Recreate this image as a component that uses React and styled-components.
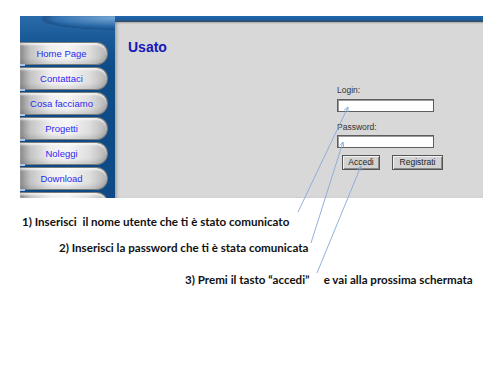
import React from "react"
import styled, { createGlobalStyle } from "styled-components"

const GlobalStyle = createGlobalStyle`
  html, body {
    margin: 0;
    padding: 0;
    background: #fff;
  }
`

const menu = ["Home Page", "Contattaci", "Cosa facciamo", "Progetti", "Noleggi", "Download", ""]

const notes = [
  { indent: 2, gap: 16, text: "1) Inserisci\u00a0 il nome utente che ti è stato comunicato" },
  { indent: 39, gap: 11, text: "2) Inserisci la password che ti è stata comunicata" },
  { indent: 165, gap: 17, text: "3) Premi il tasto \u201caccedi\u201d\u00a0\u00a0\u00a0\u00a0 e vai alla prossima schermata" },
]

// from (bottom end) -> to (arrow tip)
const arrows = [
  { x1: 298, y1: 212, x2: 348, y2: 107 },
  { x1: 311, y1: 243, x2: 343, y2: 142 },
  { x1: 317, y1: 273, x2: 361, y2: 166 },
]

function head({ x1, y1, x2, y2 }) {
  const a = Math.atan2(y1 - y2, x1 - x2)
  const len = 5
  const p = (d) => `${x2 + len * Math.cos(a + d)},${y2 + len * Math.sin(a + d)}`
  return `${p(0.45)} ${x2},${y2} ${p(-0.45)}`
}

function App() {
  return (
    <Page>
      <GlobalStyle />
      <Frame>
        <Sidebar>
          {menu.map((m, i) => (
            <MenuButton key={i} $last={i === menu.length - 1}>{m}</MenuButton>
          ))}
        </Sidebar>
        <Content>
          <Title>Usato</Title>
          <LoginForm onSubmit={(e) => e.preventDefault()}>
            <Label>Login:</Label>
            <Field type="text" />
            <Label $spaced>Password:</Label>
            <Field type="password" />
            <Actions>
              <FormButton type="submit" $w={38}>Accedi</FormButton>
              <FormButton type="button" $w={51}>Registrati</FormButton>
            </Actions>
          </LoginForm>
        </Content>
      </Frame>

      <Notes>
        {notes.map((n, i) => (
          <Note key={i} $indent={n.indent} $gap={n.gap}>{n.text}</Note>
        ))}
      </Notes>

      <Overlay width="500" height="375" viewBox="0 0 500 375">
        {arrows.map((a, i) => (
          <g key={i} stroke="#86a8d8" strokeWidth="0.9" fill="none">
            <line x1={a.x1} y1={a.y1} x2={a.x2} y2={a.y2} />
            <polyline points={head(a)} />
          </g>
        ))}
      </Overlay>
    </Page>
  )
}

//styled components

const Page = styled.div`
  position: relative;
  width: 500px;
  height: 375px;
  padding: 16px 0 0 20px;
  box-sizing: border-box;
  overflow: hidden;
`
const Frame = styled.div`
  display: flex;
  width: 463px;
  height: 182px;
  background: linear-gradient(180deg, #2067aa 0px, #1a5c9e 4px, #2e4f6e 5px, #3b4c5c 6px, #0e4c88 6px);
`
const Sidebar = styled.div`
  width: 95px;
  display: flex;
  flex-direction: column;
  gap: 2px;
  padding-top: 26px;
  overflow: hidden;
  background:
    radial-gradient(ellipse 70px 9px at 95px 2px, rgba(150,190,230,0.7), rgba(150,190,230,0) 100%),
    radial-gradient(ellipse 75px 11px at 95px 3px, rgba(20,50,90,0.0) 80%, rgba(20,50,90,0.35) 95%, rgba(20,50,90,0) 100%),
    linear-gradient(180deg, #2a6bab 0%, #1a5a98 12%, #0e4c88 28%, #0d4a86 100%);
`
const MenuButton = styled.div`
  position: relative;
  flex: 0 0 23px;
  width: 88px;
  box-sizing: border-box;
  display: flex;
  align-items: center;
  justify-content: center;
  padding-right: 4px;
  border-radius: 0 12px 12px 0;
  border: 1px solid #7b7b7b;
  border-left: none;
  background: linear-gradient(90deg, #8a8a8a 0%, #c4c4c4 12%, #efefef 35%, #f6f6f6 55%, #dedede 80%, #b5b5b5 100%);
  box-shadow: inset 0 -3px 4px rgba(0,0,0,0.12), inset 0 2px 2px rgba(255,255,255,0.7);
  font-family: "Liberation Sans", Arial, sans-serif;
  font-size: 9.5px;
  color: #2a2af0;
  white-space: nowrap;

  &::before {
    content: "";
    position: absolute;
    left: 0;
    bottom: -2px;
    width: 5px;
    height: 2px;
    background: #a9c6e6;
    display: ${(p) => (p.$last ? "none" : "block")};
  }
`
const Content = styled.div`
  flex: 1;
  margin-top: 6px;
  padding: 17px 0 0 13px;
  background: #d8d8d8;
  box-shadow: inset 3px 0 3px -1px rgba(0,0,0,0.22), inset 0 2px 2px -1px rgba(0,0,0,0.2);
`
const Title = styled.h1`
  margin: 0;
  font-family: "Liberation Sans", Arial, sans-serif;
  font-weight: bold;
  font-size: 14px;
  line-height: 16px;
  color: #1616b8;
`
const LoginForm = styled.form`
  display: flex;
  flex-direction: column;
  align-items: flex-start;
  margin: 30px 0 0 209px;
`
const Label = styled.label`
  font-family: "Liberation Sans", Arial, sans-serif;
  font-size: 8.5px;
  line-height: 11px;
  color: #333;
  margin-top: ${(p) => (p.$spaced ? "10px" : "0")};
  margin-bottom: ${(p) => (p.$spaced ? "2px" : "3px")};
`
const Field = styled.input`
  width: 97px;
  height: 13px;
  box-sizing: border-box;
  margin: 0;
  padding: 0 2px;
  border: 1px solid #5e5e5e;
  box-shadow: inset 1px 1px 0 #9a9a9a;
  background: #fff;
`
const Actions = styled.div`
  display: flex;
  gap: 12px;
  margin: 7px 0 0 5px;
`
const FormButton = styled.button`
  width: ${(p) => p.$w}px;
  height: 15px;
  box-sizing: border-box;
  padding: 0;
  background: #d3d3d3;
  border: 1px solid #555;
  box-shadow: inset 1px 1px 0 #f2f2f2, inset -1px -1px 0 #8a8a8a;
  font-family: "Liberation Sans", Arial, sans-serif;
  font-size: 8.5px;
  line-height: 13px;
  color: #222;
`
const Notes = styled.div`
  display: flex;
  flex-direction: column;
`
const Note = styled.div`
  margin-top: ${(p) => p.$gap}px;
  padding-left: ${(p) => p.$indent}px;
  font-family: Lato, "Liberation Sans", sans-serif;
  font-weight: bold;
  font-size: 11.6px;
  line-height: 15px;
  color: #111;
  white-space: nowrap;
`
const Overlay = styled.svg`
  position: absolute;
  left: 0;
  top: 0;
  pointer-events: none;
`

export default App
